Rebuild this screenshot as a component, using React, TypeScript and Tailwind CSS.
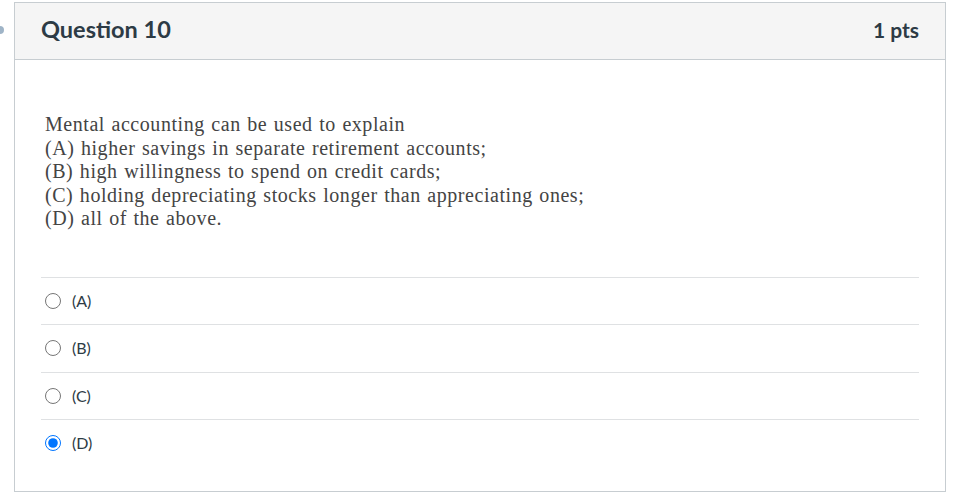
import React from "react";

const options = ["(A)", "(B)", "(C)", "(D)"];

export default function App() {
  return (
    <div className="relative min-h-[493px] bg-white pl-[14px] pr-[7px] pt-[2px]">
      {/* link marker peeking in from the left edge */}
      <div className="absolute left-[-4px] top-[26px] h-[8px] w-[8px] rounded-full bg-[#9fb4c7]" />

      <div className="flex h-[490px] flex-col border border-[#c7cdd1]">
        <div className="flex h-[57px] items-center justify-between border-b border-[#c7cdd1] bg-[#f5f5f5] pl-[26px] pr-[26px] font-['Lato',sans-serif] font-bold text-[#2d3b45]">
          <span className="-mt-[3px] text-[23.5px]">Question 10</span>
          <span className="-mt-[3px] text-[21px]">1 pts</span>
        </div>

        <div className="px-[26px]">
          <div className="pl-[4px] pt-[53px] pb-[46px] font-['Liberation_Serif',serif] text-[20px] leading-[23.5px] tracking-[0.55px] [word-spacing:1px] text-[#444]">
            <p>Mental accounting can be used to explain</p>
            <p>(A) higher savings in separate retirement accounts;</p>
            <p>(B) high willingness to spend on credit cards;</p>
            <p>(C) holding depreciating stocks longer than appreciating ones;</p>
            <p>(D) all of the above.</p>
          </div>

          <div>
            {options.map((o) => (
              <label
                key={o}
                className="flex h-[47.5px] items-center border-t border-[#dfe1e3] pl-[4px] font-['Lato',sans-serif] text-[16px] text-[#2d3b45]"
              >
                <input
                  type="radio"
                  name="q10"
                  defaultChecked={o === "(D)"}
                  className="m-0 h-[16px] w-[16px] accent-[#0075ff]"
                />
                <span className="ml-[11px]">{o}</span>
              </label>
            ))}
          </div>
        </div>
      </div>
    </div>
  );
}
